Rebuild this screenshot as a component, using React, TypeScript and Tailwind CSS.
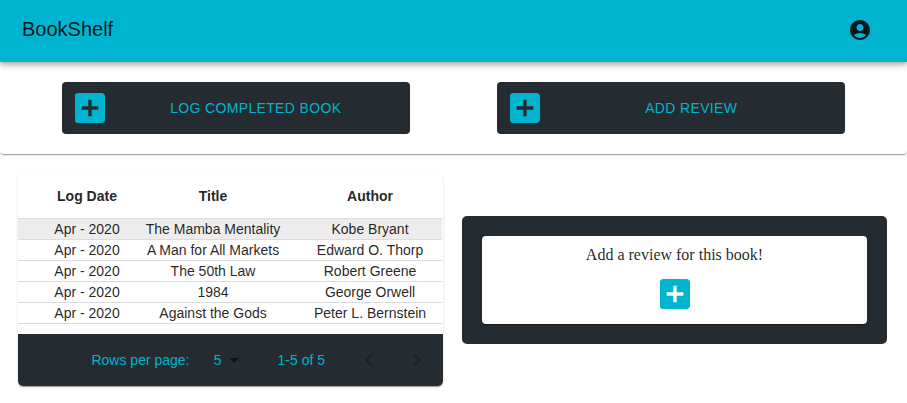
import {
  MdAccountCircle,
  MdAddBox,
  MdArrowDropDown,
  MdKeyboardArrowLeft,
  MdKeyboardArrowRight,
} from "react-icons/md";

const books = [
  { date: "Apr - 2020", title: "The Mamba Mentality", author: "Kobe Bryant" },
  { date: "Apr - 2020", title: "A Man for All Markets", author: "Edward O. Thorp" },
  { date: "Apr - 2020", title: "The 50th Law", author: "Robert Greene" },
  { date: "Apr - 2020", title: "1984", author: "George Orwell" },
  { date: "Apr - 2020", title: "Against the Gods", author: "Peter L. Bernstein" },
];

function Header() {
  return (
    <header className="relative z-10 flex h-[62px] items-center justify-between bg-[#00b4d0] pr-[23px] pb-[2px] pl-[22px] text-black/87 shadow-[0px_2px_4px_-1px_rgba(0,0,0,0.2),0px_4px_5px_0px_rgba(0,0,0,0.14),0px_1px_10px_0px_rgba(0,0,0,0.12)]">
      <h1 className="pb-[2px] text-[20px] leading-7">BookShelf</h1>
      <button type="button" aria-label="Account" className="p-3">
        <MdAccountCircle className="size-6" />
      </button>
    </header>
  );
}

function ActionButton({ label }: { label: string }) {
  return (
    <button
      type="button"
      className="flex w-4/5 items-center justify-self-center rounded bg-[#242c31] px-2 py-[6px] text-sm tracking-wide text-[#00b4d0] uppercase"
    >
      <MdAddBox className="size-10" />
      <span className="flex-1 text-center">{label}</span>
    </button>
  );
}

function BookTable() {
  return (
    <section className="overflow-hidden rounded-[5px] bg-white shadow-[0px_2px_1px_-1px_rgba(0,0,0,0.2),0px_1px_1px_0px_rgba(0,0,0,0.14),0px_1px_3px_0px_rgba(0,0,0,0.12)]">
      <div className="pr-px pb-[10px]">
        <table className="w-full table-fixed border-collapse text-center text-sm text-black/87">
          <thead>
            <tr className="h-11 border-b border-[#dcdcdc]">
              <th className="w-[25%] p-0 pl-8 font-bold">Log Date</th>
              <th className="w-[42%] p-0 font-bold">Title</th>
              <th className="p-0 pr-1 font-bold">Author</th>
            </tr>
          </thead>
          <tbody>
            {books.map((book) => (
              <tr key={book.title} className="border-b border-[#dcdcdc] first:bg-[#ededed]">
                <td className="p-0 pl-8">{book.date}</td>
                <td className="p-0">{book.title}</td>
                <td className="p-0 pr-1">{book.author}</td>
              </tr>
            ))}
          </tbody>
        </table>
      </div>
      <div className="flex h-[52px] items-center justify-end bg-[#242c31] pr-[2px] text-sm text-[#00b4d0]">
        <label htmlFor="rows-per-page">Rows per page:</label>
        <div className="relative mr-8 ml-2">
          <select
            id="rows-per-page"
            defaultValue="5"
            className="block h-6 w-12 appearance-none bg-transparent pr-6 pl-2 [text-align-last:right]"
          >
            <option value="5">5</option>
            <option value="10">10</option>
            <option value="25">25</option>
          </select>
          <MdArrowDropDown className="pointer-events-none absolute top-0 right-0 size-6 text-black/54" />
        </div>
        <span>1-5 of 5</span>
        <div className="ml-5 flex text-black/26">
          <button type="button" disabled aria-label="Previous page" className="p-3">
            <MdKeyboardArrowLeft className="size-6" />
          </button>
          <button type="button" disabled aria-label="Next page" className="p-3">
            <MdKeyboardArrowRight className="size-6" />
          </button>
        </div>
      </div>
    </section>
  );
}

function ReviewCard() {
  return (
    <section className="self-center rounded-[5px] bg-[#242c31] p-5">
      <div className="flex flex-col items-center gap-[10px] rounded bg-white p-[10px] shadow-[0px_2px_1px_-1px_rgba(0,0,0,0.2),0px_1px_1px_0px_rgba(0,0,0,0.14),0px_1px_3px_0px_rgba(0,0,0,0.12)]">
        <p className="font-['Liberation_Serif',serif] text-base leading-[18px] text-black/87">
          Add a review for this book!
        </p>
        <button type="button" aria-label="Add a review" className="text-[#00b4d0]">
          <MdAddBox className="size-10" />
        </button>
      </div>
    </section>
  );
}

export default function App() {
  return (
    <div className="bg-white font-['Liberation_Sans',Arial,sans-serif]">
      <Header />
      <nav className="grid grid-cols-2 rounded px-[18px] py-5 shadow-[0px_2px_1px_-1px_rgba(0,0,0,0.2),0px_1px_1px_0px_rgba(0,0,0,0.14),0px_1px_3px_0px_rgba(0,0,0,0.12)]">
        <ActionButton label="Log completed book" />
        <ActionButton label="Add review" />
      </nav>
      <main className="grid grid-cols-2 gap-[19px] py-5 pr-5 pl-[18px]">
        <BookTable />
        <ReviewCard />
      </main>
    </div>
  );
}
